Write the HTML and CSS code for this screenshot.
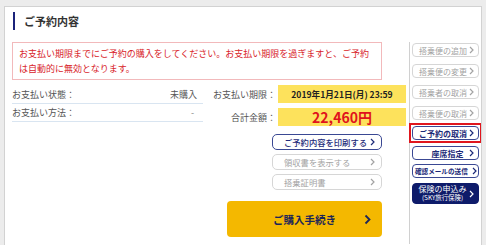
FILE: index.html
```html
<!DOCTYPE html>
<html lang="ja">
<head>
<meta charset="utf-8">
<link rel="stylesheet" href="styles.css">
</head>
<body>
<div class="panel">
  <div class="head"><span class="bar"></span><h1 class="title">ご予約内容</h1></div>
  <div class="content">
    <div class="main">
      <div class="notice">お支払い期限までにご予約の購入をしてください。お支払い期限を過ぎますと、ご予約<br>は自動的に無効となります。</div>
      <div class="details">
        <div class="status">
          <div class="srow"><span>お支払い状態：</span><span>未購入</span></div>
          <div class="srow"><span>お支払い方法：</span><span class="dash">-</span></div>
        </div>
        <div class="pay">
          <div class="prow"><span class="plabel">お支払い期限：</span><span class="pval date">2019年1月21日(月) 23:59</span></div>
          <div class="prow"><span class="plabel">合計金額：</span><span class="pval amount">22,460円</span></div>
          <div class="actions">
            <a class="abtn on"><span>ご予約内容を印刷する</span><svg class="chev" width="5" height="8" viewBox="0 0 5 8"><polyline points="1,1 4,4 1,7" /></svg></a>
            <a class="abtn off"><span>領収書を表示する</span><svg class="chev" width="5" height="8" viewBox="0 0 5 8"><polyline points="1,1 4,4 1,7" /></svg></a>
            <a class="abtn off"><span>搭乗証明書</span><svg class="chev" width="5" height="8" viewBox="0 0 5 8"><polyline points="1,1 4,4 1,7" /></svg></a>
          </div>
          <a class="buy"><span>ご購入手続き</span><svg class="bchev" width="7" height="11" viewBox="0 0 7 11"><polyline points="1.5,1.5 5.5,5.5 1.5,9.5" /></svg></a>
        </div>
      </div>
    </div>
    <div class="side">
      <a class="sbtn off"><span>搭乗便の追加</span><svg class="chev" width="5" height="8" viewBox="0 0 5 8"><polyline points="1,1 4,4 1,7" /></svg></a>
      <a class="sbtn off"><span>搭乗便の変更</span><svg class="chev" width="5" height="8" viewBox="0 0 5 8"><polyline points="1,1 4,4 1,7" /></svg></a>
      <a class="sbtn off"><span>搭乗者の取消</span><svg class="chev" width="5" height="8" viewBox="0 0 5 8"><polyline points="1,1 4,4 1,7" /></svg></a>
      <a class="sbtn off"><span>搭乗便の取消</span><svg class="chev" width="5" height="8" viewBox="0 0 5 8"><polyline points="1,1 4,4 1,7" /></svg></a>
      <div class="mark">
        <a class="sbtn on"><span>ご予約の取消</span><svg class="chev" width="5" height="8" viewBox="0 0 5 8"><polyline points="1,1 4,4 1,7" /></svg></a>
      </div>
      <a class="sbtn on seat"><span>座席指定</span><svg class="chev" width="5" height="8" viewBox="0 0 5 8"><polyline points="1,1 4,4 1,7" /></svg></a>
      <a class="sbtn on mail"><span>確認メールの送信</span><svg class="chev" width="5" height="8" viewBox="0 0 5 8"><polyline points="1,1 4,4 1,7" /></svg></a>
      <a class="sbtn ins"><span class="instext"><span class="ins1">保険の申込み</span><span class="ins2">(SKY旅行保険)</span></span><svg class="chev" width="5" height="8" viewBox="0 0 5 8"><polyline points="1,1 4,4 1,7" /></svg></a>
    </div>
  </div>
</div>
</body>
</html>
```

FILE: styles.css
```css
html, body {
  margin: 0;
  padding: 0;
  height: 245px;
  overflow: hidden;
  background: #ececec;
  font-family: "Noto Sans CJK JP", "Noto Sans", sans-serif;
}
.panel {
  margin: 6px 4px 0 4px;
  height: 239px;
  background: #fff;
  border: 1px solid #d2d2d2;
  border-bottom: 0;
  box-sizing: border-box;
  overflow: hidden;
}
.head {
  display: flex;
  align-items: center;
  padding: 5px 0 0 8px;
}
.bar {
  width: 2px;
  height: 18px;
  background: #1b237a;
}
.title {
  margin: 0 0 0 9px;
  font-size: 11px;
  line-height: 18px;
  font-weight: bold;
  color: #333;
}
.content {
  display: flex;
  margin-top: 12px;
  height: 202px;
}
.main {
  flex: 0 0 404px;
  box-sizing: border-box;
  padding-left: 7px;
}
.notice {
  width: 370px;
  box-sizing: border-box;
  border: 1px solid #f2b9bb;
  padding: 3px 6px;
  font-size: 9px;
  line-height: 15px;
  color: #d8232a;
  white-space: nowrap;
}
.details {
  display: flex;
}
.status {
  width: 191px;
  margin-top: 6px;
}
.srow {
  display: flex;
  justify-content: space-between;
  align-items: center;
  height: 17px;
  border-bottom: 1px solid #d9e5f1;
  padding-right: 6px;
  font-size: 9px;
  color: #555;
}
.dash {
  padding-right: 3px;
  color: #888;
}
.pay {
  flex: 1;
  margin-top: 5px;
}
.prow {
  display: flex;
  align-items: center;
  margin-bottom: 5px;
}
.plabel {
  width: 73px;
  text-align: right;
  font-size: 9px;
  color: #555;
}
.pval {
  margin-left: 2px;
  width: 128px;
  height: 18px;
  background: #fde25c;
  display: flex;
  align-items: center;
  justify-content: center;
  font-weight: bold;
}
.date {
  font-size: 8.6px;
  color: #222;
}
.amount {
  font-size: 14px;
  color: #e0131c;
}
.actions {
  margin: 8px 0 0 69px;
  width: 110px;
  display: flex;
  flex-direction: column;
  gap: 4px;
}
.abtn {
  display: flex;
  align-items: center;
  height: 16px;
  box-sizing: border-box;
  border-radius: 5px;
  padding: 0 6px 0 11px;
  font-size: 8.3px;
}
.abtn .chev {
  margin-left: auto;
}
.chev polyline {
  fill: none;
  stroke: currentColor;
  stroke-width: 1.2;
}
.on {
  border: 1px solid #3a4893;
  color: #1c2a78;
}
.abtn.on {
  font-weight: 500;
}
.off {
  border: 1px solid #d6d6d6;
  color: #a3a3a3;
}
.buy {
  display: flex;
  align-items: center;
  margin: 11px 0 0 24px;
  width: 155px;
  height: 36px;
  box-sizing: border-box;
  padding: 0 11px 0 46px;
  background: #f4b800;
  border-radius: 4px;
  font-size: 10.5px;
  font-weight: bold;
  color: #1c2558;
}
.bchev {
  margin-left: auto;
}
.bchev polyline {
  fill: none;
  stroke: #1c2558;
  stroke-width: 1.8;
}
.side {
  flex: 1;
  border-left: 1px solid #d0d0d0;
  padding: 1px 0 0 2px;
  display: flex;
  flex-direction: column;
  align-items: flex-start;
}
.sbtn {
  display: flex;
  align-items: center;
  width: 67px;
  height: 14px;
  box-sizing: border-box;
  border-radius: 4px;
  padding: 0 4px 0 6px;
  font-size: 8px;
  margin-bottom: 7px;
}
.sbtn .chev {
  margin-left: auto;
}
.sbtn.on {
  font-weight: bold;
}
.mark {
  margin: -4px 0 0 -3px;
  width: 73px;
  box-sizing: border-box;
  border: 2px solid #e0161d;
  padding: 1px;
  display: flex;
  justify-content: center;
}
.mark .sbtn {
  margin: 0;
}
.seat {
  margin-top: 3px;
  margin-bottom: 4px;
  padding-left: 13px;
}
.seat span {
  flex: 1;
  text-align: center;
}
.mail {
  padding: 0 1px 0 2px;
  font-size: 6.6px;
  margin-bottom: 5px;
}
.ins {
  height: 21px;
  background: #0e1b6a;
  color: #fff;
  border: 1px solid #0e1b6a;
  padding: 0 4px 0 3px;
}
.instext {
  flex: 1;
  display: flex;
  flex-direction: column;
  align-items: center;
  line-height: 8.5px;
}
.ins1 {
  font-size: 8px;
}
.ins2 {
  font-size: 6.4px;
}
```
